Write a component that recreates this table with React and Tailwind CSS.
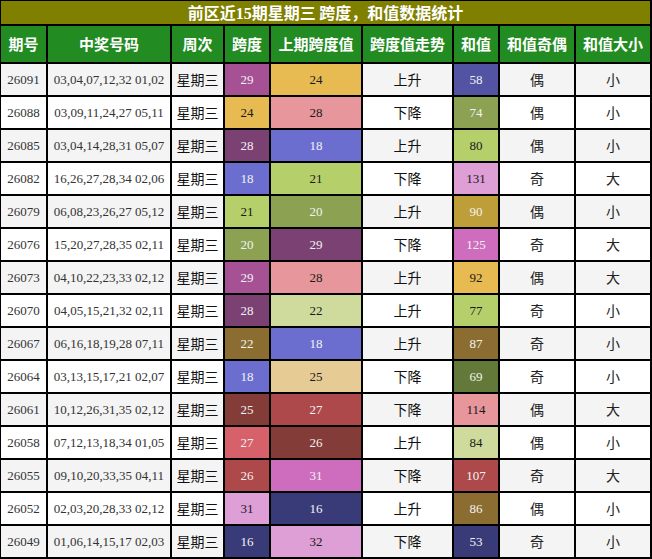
import React from "react";

const rows = [
  ["26091", "03,04,07,12,32 01,02", 29, "#a55194", 1, 24, "#e7ba52", 0, "上升", 58, "#5254a3", 1, "偶", "小"],
  ["26088", "03,09,11,24,27 05,11", 24, "#e7ba52", 0, 28, "#e7969c", 0, "下降", 74, "#8ca252", 1, "偶", "小"],
  ["26085", "03,04,14,28,31 05,07", 28, "#7b4173", 1, 18, "#6b6ecf", 1, "上升", 80, "#b5cf6b", 0, "偶", "小"],
  ["26082", "16,26,27,28,34 02,06", 18, "#6b6ecf", 1, 21, "#b5cf6b", 0, "下降", 131, "#de9ed6", 0, "奇", "大"],
  ["26079", "06,08,23,26,27 05,12", 21, "#b5cf6b", 0, 20, "#8ca252", 1, "上升", 90, "#bd9e39", 1, "偶", "小"],
  ["26076", "15,20,27,28,35 02,11", 20, "#8ca252", 1, 29, "#7b4173", 1, "下降", 125, "#ce6dbd", 1, "奇", "大"],
  ["26073", "04,10,22,23,33 02,12", 29, "#a55194", 1, 28, "#e7969c", 0, "上升", 92, "#e7ba52", 0, "偶", "大"],
  ["26070", "04,05,15,21,32 02,11", 28, "#7b4173", 1, 22, "#cedb9c", 0, "上升", 77, "#b5cf6b", 0, "奇", "小"],
  ["26067", "06,16,18,19,28 07,11", 22, "#8c6d31", 1, 18, "#6b6ecf", 1, "上升", 87, "#8c6d31", 1, "奇", "小"],
  ["26064", "03,13,15,17,21 02,07", 18, "#6b6ecf", 1, 25, "#e7cb94", 0, "下降", 69, "#637939", 1, "奇", "小"],
  ["26061", "10,12,26,31,35 02,12", 25, "#843c39", 1, 27, "#ad494a", 1, "下降", 114, "#e7969c", 0, "偶", "大"],
  ["26058", "07,12,13,18,34 01,05", 27, "#d6616b", 1, 26, "#843c39", 1, "上升", 84, "#cedb9c", 0, "偶", "小"],
  ["26055", "09,10,20,33,35 04,11", 26, "#ad494a", 1, 31, "#ce6dbd", 1, "下降", 107, "#ad494a", 1, "奇", "大"],
  ["26052", "02,03,20,28,33 02,12", 31, "#de9ed6", 0, 16, "#393b79", 1, "上升", 86, "#8c6d31", 1, "偶", "小"],
  ["26049", "01,06,14,15,17 02,03", 16, "#393b79", 1, 32, "#de9ed6", 0, "下降", 53, "#393b79", 1, "奇", "小"],
];

const headers = ["期号", "中奖号码", "周次", "跨度", "上期跨度值", "跨度值走势", "和值", "和值奇偶", "和值大小"];

const serif = "font-['Liberation_Serif','Times_New_Roman',serif]";
const cjk = "font-['Noto_Sans_CJK_SC','Noto_Sans',sans-serif]";

function Colored({ value, bg, light }) {
  return (
    <div
      className={`flex items-center justify-center text-[13px] ${serif} ${light ? "text-[#f2f2f2]" : "text-[#1a1a1a]"}`}
      style={{ backgroundColor: bg }}
    >
      {value}
    </div>
  );
}

export default function App() {
  return (
    <div className="w-[652px] h-[559px] bg-black pt-[1px] pl-[1px] pr-[2px] pb-[2px]">
      <div className="grid grid-cols-[45px_122px_51px_44px_90px_89px_44px_74px_74px] grid-rows-[23px_36px_repeat(15,31px)] gap-[2px]">
        <div className={`col-span-9 bg-[#808000] flex items-center justify-center text-white font-bold text-[16px] ${cjk}`}>
          <span>前区近<span className={serif}>15</span>期星期三 跨度，和值数据统计</span>
        </div>
        {headers.map((h) => (
          <div key={h} className={`bg-[#228b22] flex items-center justify-center text-white font-bold text-[15px] ${cjk}`}>
            {h}
          </div>
        ))}
        {rows.map((r, i) => {
          const rowBg = i % 2 === 0 ? "bg-[#f4f4f4]" : "bg-white";
          const plain = `${rowBg} flex items-center justify-center`;
          return (
            <React.Fragment key={r[0]}>
              <div className={`${plain} text-[13px] text-[#333] ${serif}`}>{r[0]}</div>
              <div className={`${plain} text-[13px] text-[#333] ${serif}`}>{r[1]}</div>
              <div className={`${plain} text-[14px] text-[#111] ${cjk}`}>星期三</div>
              <Colored value={r[2]} bg={r[3]} light={r[4]} />
              <Colored value={r[5]} bg={r[6]} light={r[7]} />
              <div className={`${plain} text-[14px] text-[#111] ${cjk}`}>{r[8]}</div>
              <Colored value={r[9]} bg={r[10]} light={r[11]} />
              <div className={`${plain} text-[14px] text-[#222] ${cjk}`}>{r[12]}</div>
              <div className={`${plain} text-[14px] text-[#222] ${cjk}`}>{r[13]}</div>
            </React.Fragment>
          );
        })}
      </div>
    </div>
  );
}
